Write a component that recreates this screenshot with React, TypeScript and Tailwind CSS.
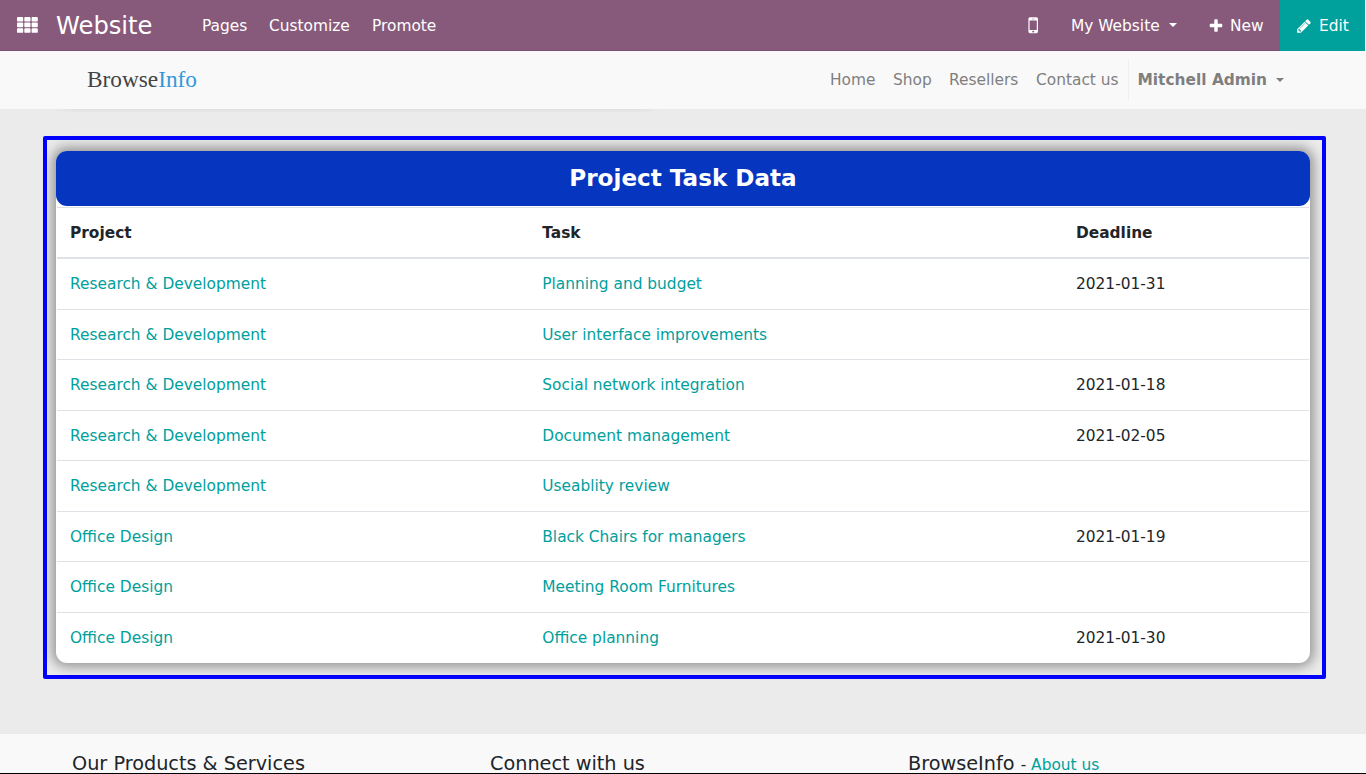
const rows = [
  ['Research & Development', 'Planning and budget', '2021-01-31'],
  ['Research & Development', 'User interface improvements', ''],
  ['Research & Development', 'Social network integration', '2021-01-18'],
  ['Research & Development', 'Document management', '2021-02-05'],
  ['Research & Development', 'Useablity review', ''],
  ['Office Design', 'Black Chairs for managers', '2021-01-19'],
  ['Office Design', 'Meeting Room Furnitures', ''],
  ['Office Design', 'Office planning', '2021-01-30'],
];

function Icon({ d, className }: { d: string; className: string }) {
  return (
    <svg viewBox="0 0 1792 1792" fill="currentColor" className={className}>
      <path d={d} />
    </svg>
  );
}

const MOBILE =
  'M976 1408q0-33-23.5-56.5t-56.5-23.5-56.5 23.5-23.5 56.5 23.5 56.5 56.5 23.5 56.5-23.5 23.5-56.5zm208-160v-704q0-13-9.5-22.5t-22.5-9.5h-512q-13 0-22.5 9.5t-9.5 22.5v704q0 13 9.5 22.5t22.5 9.5h512q13 0 22.5-9.5t9.5-22.5zm-192-848q0-16-16-16h-160q-16 0-16 16t16 16h160q16 0 16-16zm288-16v1024q0 52-38 90t-90 38h-512q-52 0-90-38t-38-90v-1024q0-52 38-90t90-38h512q52 0 90 38t38 90z';
const PLUS =
  'M1600 736v192q0 40-28 68t-68 28h-416v416q0 40-28 68t-68 28h-192q-40 0-68-28t-28-68v-416h-416q-40 0-68-28t-28-68v-192q0-40 28-68t68-28h416v-416q0-40 28-68t68-28h192q40 0 68 28t28 68v416h416q40 0 68 28t28 68z';
const PENCIL =
  'M491 1536l91-91-235-235-91 91v107h128v128h107zm523-928q0-22-22-22-10 0-17 7l-542 542q-7 7-7 17 0 22 22 22 10 0 17-7l542-542q7-7 7-17zm-54-192l416 416-832 832h-416v-416zm683 96q0 53-37 90l-166 166-416-416 166-165q36-38 90-38 53 0 91 38l235 234q37 39 37 91z';

function Caret({ className }: { className: string }) {
  return (
    <svg viewBox="0 0 8 4" fill="currentColor" className={className}>
      <path d="M0 0h8L4 4z" />
    </svg>
  );
}

function AppsIcon() {
  return (
    <svg viewBox="0 0 21 16" fill="currentColor" className="mb-[3px] ml-[17px] h-4 w-[21px] shrink-0">
      {[0, 5.6, 11.2].map((y) =>
        [0, 7.3, 14.6].map((x) => <rect key={`${x}-${y}`} x={x} y={y} width="6.2" height="4.6" rx="0.9" />),
      )}
    </svg>
  );
}

function TopBar() {
  return (
    <header className="flex h-[51px] items-center bg-[#875a7b] pt-px text-white shadow-[inset_0_-1px_0_#7b4e6e]">
      <AppsIcon />
      <span className="ml-[18px] w-[146px] pb-px text-[24.2px] leading-9">Website</span>
      <nav className="flex">
        <a className="w-[67px]">Pages</a>
        <a className="w-[103px]">Customize</a>
        <a>Promote</a>
      </nav>
      <div className="ml-auto flex h-full items-center">
        <Icon d={MOBILE} className="mb-0.5 mr-[27px] h-[22.4px] w-[22.4px]" />
        <span className="w-[98px]">My Website</span>
        <Caret className="mb-0.5 mr-[31px] h-1 w-2" />
        <Icon d={PLUS} className="mb-px mr-[6px] h-4 w-4" />
        <span className="w-[50px]">New</span>
        <div className="-mt-px flex h-[51px] w-[85px] items-center bg-[#00a09d] pt-px">
          <Icon d={PENCIL} className="mb-px ml-[16px] mr-[7px] h-4 w-4" />
          <span>Edit</span>
        </div>
        <div className="-mt-px h-[51px] w-px bg-[#f8f8f8]" />
      </div>
    </header>
  );
}

function SiteHeader() {
  return (
    <div className="flex h-[58px] items-center bg-[#f9f9f9] text-[#7f7f7f]">
      <span className="ml-[87px] pb-0.5 font-['Liberation_Serif',serif] text-[23.3px] leading-8 text-[#444]">
        Browse<span className="text-[#3498db]">Info</span>
      </span>
      <nav className="ml-auto flex items-center">
        <a className="w-[63px]">Home</a>
        <a className="w-[56px]">Shop</a>
        <a className="w-[87px]">Resellers</a>
        <a className="w-[92px]">Contact us</a>
        <div className="mr-[8.5px] h-10 w-px bg-[#efefef]" />
        <span className="w-[138.5px] font-bold">Mitchell Admin</span>
        <Caret className="mr-[82px] h-1 w-2" />
      </nav>
    </div>
  );
}

function TaskTable() {
  return (
    <section className="ml-[43px] mt-[23px] h-[543px] w-[1283px] rounded-[2px] border-4 border-[#0000ff] pl-[9px] pt-[11px]">
      <div className="h-[512px] w-[1254px] rounded-[11px] bg-white shadow-[0_0_12px_4px_rgba(0,0,0,0.36)]">
        <h2 className="flex h-[55px] items-center justify-center rounded-[11px] bg-[#0635c0] pb-0.5 text-[23.1px] font-bold text-white">
          Project Task Data
        </h2>
        <div className="mx-px mt-px">
          <div className="grid h-[52px] grid-cols-[472.3px_533.7px_1fr] items-center border-b-2 border-t border-[#dee2e6] pl-[13px] font-bold">
            <span>Project</span>
            <span>Task</span>
            <span>Deadline</span>
          </div>
          {rows.map(([project, task, deadline], i) => (
            <div
              key={task}
              className={`grid grid-cols-[472.3px_533.7px_1fr] items-center pl-[13px] ${i === 0 ? 'h-[50px]' : 'h-[50.45px] border-t border-[#dee2e6] pt-[0.5px]'}`}
            >
              <a className="text-[#00a09d]">{project}</a>
              <a className="text-[#00a09d]">{task}</a>
              <span>{deadline}</span>
            </div>
          ))}
        </div>
      </div>
    </section>
  );
}

export default function App() {
  return (
    <div className="flex h-[774px] w-[1366px] flex-col overflow-hidden bg-[#ebebeb] font-['DejaVu_Sans',sans-serif] text-[15.4px] leading-6 text-[#212529]">
      <TopBar />
      <SiteHeader />
      <main className="h-[625px] shrink-0">
        <div className="ml-[56px] h-1 w-[602px] bg-linear-to-b from-[#e0e0e0] to-[#ebebeb] mask-x-from-97%" />
        <TaskTable />
      </main>
      <footer className="flex h-[40px] shrink-0 border-b border-black bg-[#f9f9f9] pl-[72px] pt-[15px] text-[19.25px] leading-[30px]">
        <h3 className="w-[418px]">Our Products &amp; Services</h3>
        <h3 className="w-[418px]">Connect with us</h3>
        <h3>
          BrowseInfo <span className="text-[15.4px]">- <a className="text-[#00a09d]">About us</a></span>
        </h3>
      </footer>
    </div>
  );
}
